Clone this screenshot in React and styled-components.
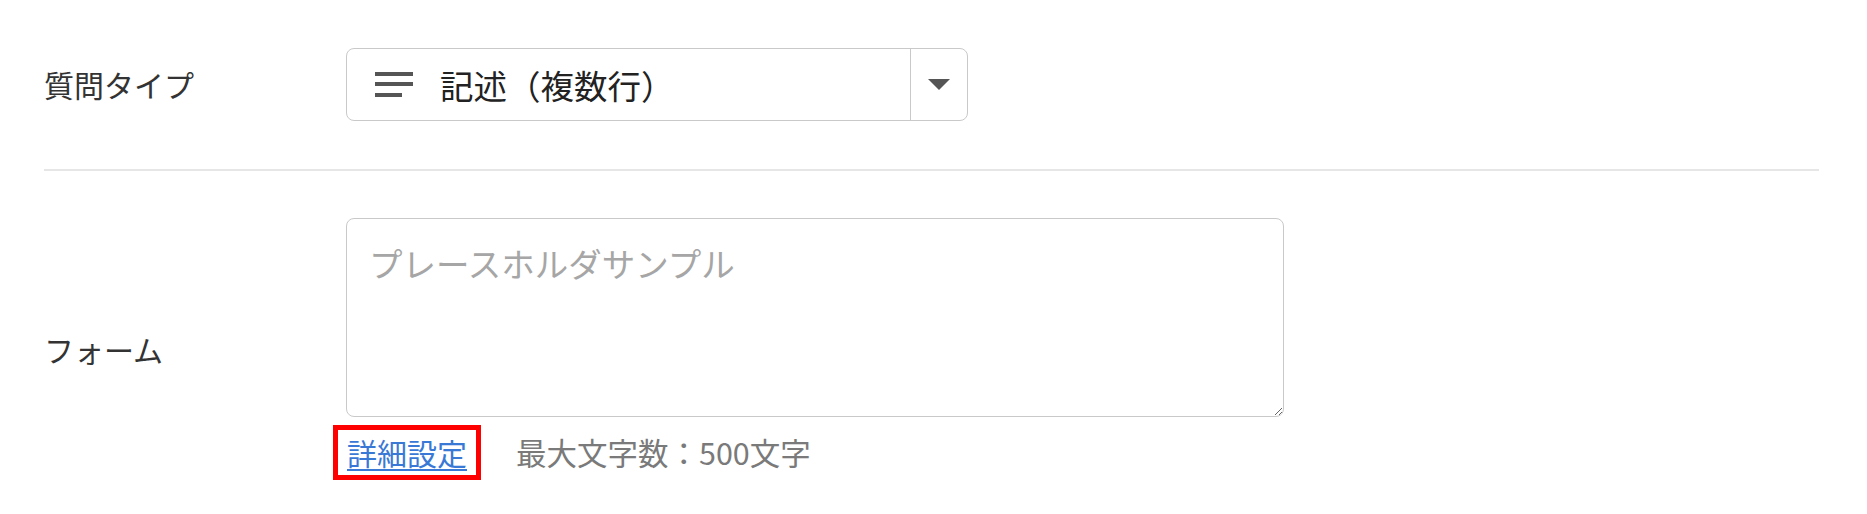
import styled, { createGlobalStyle } from "styled-components";

const GlobalStyle = createGlobalStyle`
  body {
    margin: 0;
    background: #fff;
    font-family: "Noto Sans CJK JP", "Noto Sans", sans-serif;
    color: #333;
  }
`;

const Page = styled.div`
  width: 1775px;
  padding-left: 44px;
`;

const Row = styled.div`
  display: grid;
  grid-template-columns: 302px 1fr;
  align-items: center;
  padding: ${(props) => props.padding};
  border-bottom: ${(props) => (props.divided ? "2px solid #e6e6e6" : "none")};
`;

const Label = styled.div`
  font-size: 30px;
  line-height: 1.5;
  color: #333;
`;

const Select = styled.div`
  width: 622px;
  height: 73px;
  box-sizing: border-box;
  border: 1.5px solid #c9c9c9;
  border-radius: 8px;
  display: flex;
  align-items: stretch;
  background: #fff;
`;

const SelectValue = styled.div`
  flex: 1;
  display: flex;
  align-items: center;
  gap: 27px;
  padding-left: 28px;
  font-size: 33.5px;
  color: #222;
`;

const SelectToggle = styled.div`
  width: 56px;
  border-left: 1.5px solid #c9c9c9;
  display: flex;
  align-items: center;
  justify-content: center;
`;

const Caret = styled.span`
  width: 0;
  height: 0;
  border-left: 11px solid transparent;
  border-right: 11px solid transparent;
  border-top: 11px solid #555;
`;

const Field = styled.div`
  display: flex;
  flex-direction: column;
  gap: 8px;
`;

const TextArea = styled.textarea`
  width: 938px;
  height: 199px;
  box-sizing: border-box;
  border: 1.5px solid #c9c9c9;
  border-radius: 8px;
  padding: 19px 22px;
  font-family: "Noto Sans CJK JP", sans-serif;
  font-size: 33.5px;
  line-height: 1.5;
  color: #333;
  resize: vertical;
  outline: none;

  &::placeholder {
    color: #a6a6a6;
  }
`;

const Meta = styled.div`
  display: flex;
  align-items: center;
  gap: 35px;
  margin-left: -13px;
  font-size: 30px;
  line-height: 45px;
`;

const Highlight = styled.span`
  border: 5px solid #ff0000;
  padding: 0 9px;
`;

const DetailLink = styled.a`
  color: #3a78d6;
  text-decoration: underline;
  text-underline-offset: 4px;
  text-decoration-thickness: 2px;
  cursor: pointer;
`;

const Hint = styled.span`
  color: #7a7a7a;
  font-size: 30.5px;
`;

const LinesIcon = () => (
  <svg width="38" height="26" viewBox="0 0 38 26">
    <rect x="0" y="0" width="38" height="4" fill="#555" />
    <rect x="0" y="10" width="38" height="4" fill="#555" />
    <rect x="0" y="21" width="27" height="4" fill="#555" />
  </svg>
);

const App = () => {
  return (
    <>
      <GlobalStyle />
      <Page>
        <Row padding="48px 0 48px" divided>
          <Label>質問タイプ</Label>
          <Select>
            <SelectValue>
              <LinesIcon />
              記述（複数行）
            </SelectValue>
            <SelectToggle>
              <Caret />
            </SelectToggle>
          </Select>
        </Row>
        <Row padding="47px 0 33px">
          <Label>フォーム</Label>
          <Field>
            <TextArea placeholder="プレースホルダサンプル" />
            <Meta>
              <Highlight>
                <DetailLink>詳細設定</DetailLink>
              </Highlight>
              <Hint>最大文字数：500文字</Hint>
            </Meta>
          </Field>
        </Row>
      </Page>
    </>
  );
};

export default App;
